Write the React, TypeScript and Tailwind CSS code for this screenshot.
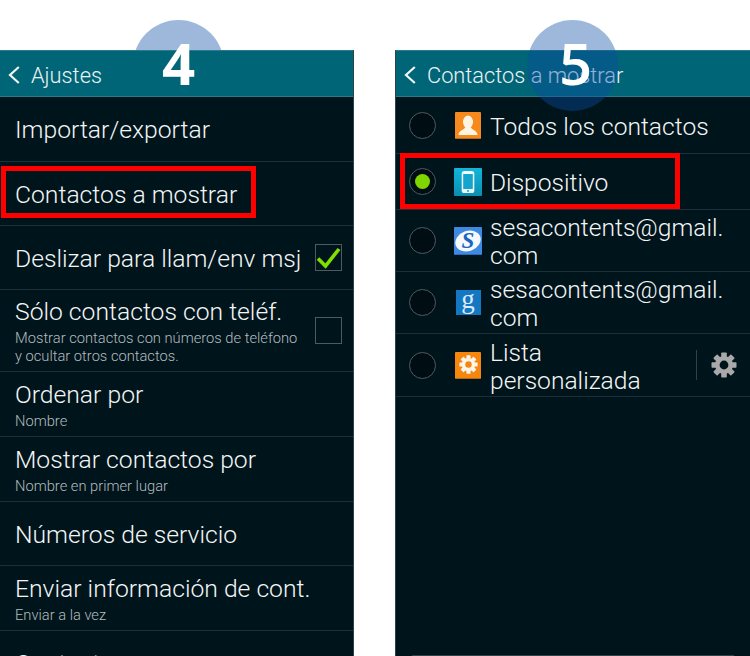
const divider = "border-b border-[#1c2f37]";

function Check({ on }: { on?: boolean }) {
  return (
    <div className="relative h-[27px] w-[27px] shrink-0 border border-[#4d5a60] bg-[#00141b]">
      {on && (
        <svg viewBox="0 0 27 27" className="absolute left-[-1px] top-[-1px] h-[27px] w-[27px]">
          <path d="M3 14.5 L10.5 22 L24 5" fill="none" stroke="#80e000" strokeWidth="3.6" />
        </svg>
      )}
    </div>
  );
}

function Row({ h, title, sub, right }: { h: string; title: string; sub?: React.ReactNode; right?: React.ReactNode }) {
  return (
    <div className={`flex items-center justify-between pl-[15px] pr-[11px] ${h} ${divider}`}>
      <div className={`min-w-0 ${sub ? "pt-[1px]" : "pt-[2px]"}`}>
        <div className="whitespace-nowrap text-[24.7px] font-light leading-[30px] text-[#f4f6f6]">{title}</div>
        {sub && <div className="mt-[2px] whitespace-nowrap text-[14.7px] font-light leading-[18px] text-[#b4bcbf]">{sub}</div>}
      </div>
      {right}
    </div>
  );
}

function Header({ title }: { title: string }) {
  return (
    <div className="flex h-[47px] shrink-0 items-center border-y border-[#2a7b8c] bg-[#006577] pl-[8px] pt-[5px]">
      <svg viewBox="0 0 12 18" className="mt-[-2px] h-[18px] w-[12px]">
        <path d="M10.8 1 L2 9 L10.8 17" fill="none" stroke="#f2f5f5" strokeWidth="2.2" />
      </svg>
      <span className="ml-[11px] whitespace-nowrap text-[21.8px] font-light text-[#eef3f4]">{title}</span>
    </div>
  );
}

function Radio({ on }: { on?: boolean }) {
  return (
    <div className="flex h-[27px] w-[27px] shrink-0 items-center justify-center rounded-full border border-[#4f5b60] bg-[#000d12]">
      {on && <div className="h-[15px] w-[15px] rounded-full bg-[#7ed500]" />}
    </div>
  );
}

function PersonIcon() {
  return (
    <svg viewBox="0 0 26 27" className="h-[27px] w-[26px]">
      <rect width="26" height="27" rx="1" fill="#f78a1e" />
      <ellipse cx="13" cy="10" rx="5" ry="6.5" fill="#fff4e4" />
      <path d="M3.5 23 C3.5 18.5 9 18 10.5 15 H15.5 C17 18 22.5 18.5 22.5 23 Z" fill="#fff4e4" />
      <rect y="26" width="26" height="1" fill="#b9651a" />
    </svg>
  );
}

function PhoneIcon() {
  return (
    <svg viewBox="0 0 28 28" className="h-[28px] w-[28px]">
      <defs>
        <linearGradient id="ph" x1="0" y1="0" x2="0" y2="1">
          <stop offset="0" stopColor="#11b6da" />
          <stop offset="1" stopColor="#0a8fb2" />
        </linearGradient>
      </defs>
      <rect width="28" height="28" rx="1" fill="url(#ph)" />
      <rect x="7.7" y="3" width="12.6" height="22" rx="2.6" fill="#eefafd" />
      <rect x="9.2" y="6" width="9.6" height="15" fill="#13a5cd" />
      <circle cx="14" cy="23" r="1" fill="#13a5cd" />
    </svg>
  );
}

function SIcon() {
  return (
    <svg viewBox="0 0 28 28" className="h-[28px] w-[28px]">
      <rect width="28" height="28" rx="1" fill="#3d8ae0" />
      <rect y="27" width="28" height="1" fill="#256fc0" />
      <ellipse cx="14" cy="14" rx="13" ry="10" fill="#f7fafd" transform="rotate(-20 14 14)" />
      <text x="14" y="21" textAnchor="middle" fontFamily="Liberation Serif, serif" fontWeight="700" fontStyle="italic" fontSize="23" fill="#1a64c4">S</text>
    </svg>
  );
}

function GIcon() {
  return (
    <div className="flex h-[25px] w-[25px] items-center justify-center bg-[#1477c2] pb-[6px] font-['Liberation_Serif',serif] text-[27px] leading-none text-[#dcebf7]">
      g
    </div>
  );
}

function Gear({ size, color, hole }: { size: number; color: string; hole: string }) {
  const teeth = [0, 45, 90, 135];
  return (
    <svg viewBox="0 0 26 26" width={size} height={size}>
      {teeth.map((a) => (
        <rect key={a} x="10.2" y="0.5" width="5.6" height="25" rx="0.8" fill={color} transform={`rotate(${a} 13 13)`} />
      ))}
      <circle cx="13" cy="13" r="9" fill={color} />
      <circle cx="13" cy="13" r="4.4" fill={hole} />
    </svg>
  );
}

function OrangeGear() {
  return (
    <div className="flex h-[27px] w-[26px] items-center justify-center rounded-[1px] border-b border-[#b9651a] bg-[#f7860f]">
      <Gear size={19} color="#fdf5ea" hole="#f7860f" />
    </div>
  );
}

function IconSlot({ children }: { children: React.ReactNode }) {
  return (
    <div className="flex w-[54px] shrink-0 pl-[18px]">
      <div className="flex w-[28px] shrink-0 justify-center">{children}</div>
    </div>
  );
}

function ContactRow({ h, icon, lines, right, on }: { h: string; icon: React.ReactNode; lines: string[]; right?: React.ReactNode; on?: boolean }) {
  return (
    <div className={`flex shrink-0 items-center pl-[13px] ${h} ${divider}`}>
      <Radio on={on} />
      <IconSlot>{icon}</IconSlot>
      <div className="flex-1 pt-[3px] text-[24.6px] font-light leading-[28px] text-[#f4f6f6]">
        {lines.map((l) => (
          <div key={l} className="whitespace-nowrap">{l}</div>
        ))}
      </div>
      {right}
    </div>
  );
}

export default function App() {
  return (
    <div className="relative h-[656px] w-[750px] overflow-hidden bg-white font-['Roboto',sans-serif]">
      {/* badge 4 sits behind the panel */}
      <div className="absolute left-[133px] top-[20px] h-[91px] w-[91px] rounded-full bg-[#9db8da]" />
      <div className="relative flex pt-[50px]">
        <div className="h-[606px] w-[354px] shrink-0 border-r border-[#2d434c] bg-[#00141b]">
          <Header title="Ajustes" />
          <Row h="h-[65px]" title="Importar/exportar" />
          <Row h="h-[64px]" title="Contactos a mostrar" />
          <Row h="h-[64px]" title="Deslizar para llam/env msj" right={<Check on />} />
          <Row
            h="h-[82px]"
            title="Sólo contactos con teléf."
            sub={<>Mostrar contactos con números de teléfono<br />y ocultar otros contactos.</>}
            right={<Check />}
          />
          <Row h="h-[65px]" title="Ordenar por" sub="Nombre" />
          <Row h="h-[65px]" title="Mostrar contactos por" sub="Nombre en primer lugar" />
          <Row h="h-[64px]" title="Números de servicio" />
          <Row h="h-[65px]" title="Enviar información de cont." sub="Enviar a la vez" />
          <Row h="h-[64px]" title="Contactos" />
        </div>
        <div className="ml-[41px] flex h-[606px] w-[355px] flex-col border-l border-[#2d434c] bg-[#00141b]">
          <Header title="Contactos a mostrar" />
          <ContactRow h="h-[57px]" icon={<PersonIcon />} lines={["Todos los contactos"]} />
          <ContactRow h="h-[56px]" icon={<PhoneIcon />} lines={["Dispositivo"]} on />
          <ContactRow h="h-[62px]" icon={<SIcon />} lines={["sesacontents@gmail.", "com"]} />
          <ContactRow h="h-[62px]" icon={<GIcon />} lines={["sesacontents@gmail.", "com"]} />
          <ContactRow
            h="h-[63px]"
            icon={<OrangeGear />}
            lines={["Lista", "personalizada"]}
            right={
              <div className="flex h-[30px] w-[54px] shrink-0 items-center justify-center border-l border-[#2d434c]">
                <Gear size={26} color="#a9a9a9" hole="#00141b" />
              </div>
            }
          />
          <div className="mx-[16px] mt-auto h-px w-[322px] bg-[#2d434c]" />
        </div>
      </div>
      {/* overlays */}
      <div className="absolute left-[527px] top-[20px] h-[91px] w-[91px] rounded-full bg-[#0a4da2]/40" />
      <div className="absolute left-[133px] top-[30px] w-[91px] text-center font-['Open_Sans',sans-serif] text-[58px] font-bold leading-[66px] text-white">4</div>
      <div className="absolute left-[530px] top-[30px] w-[91px] text-center font-['Open_Sans',sans-serif] text-[58px] font-semibold leading-[66px] text-white">5</div>
      <div className="absolute left-[1px] top-[166px] h-[52px] w-[255px] border-[5px] border-[#ff0000]" />
      <div className="absolute left-[400px] top-[153px] h-[56px] w-[280px] border-[5px] border-[#ff0000]" />
    </div>
  );
}
